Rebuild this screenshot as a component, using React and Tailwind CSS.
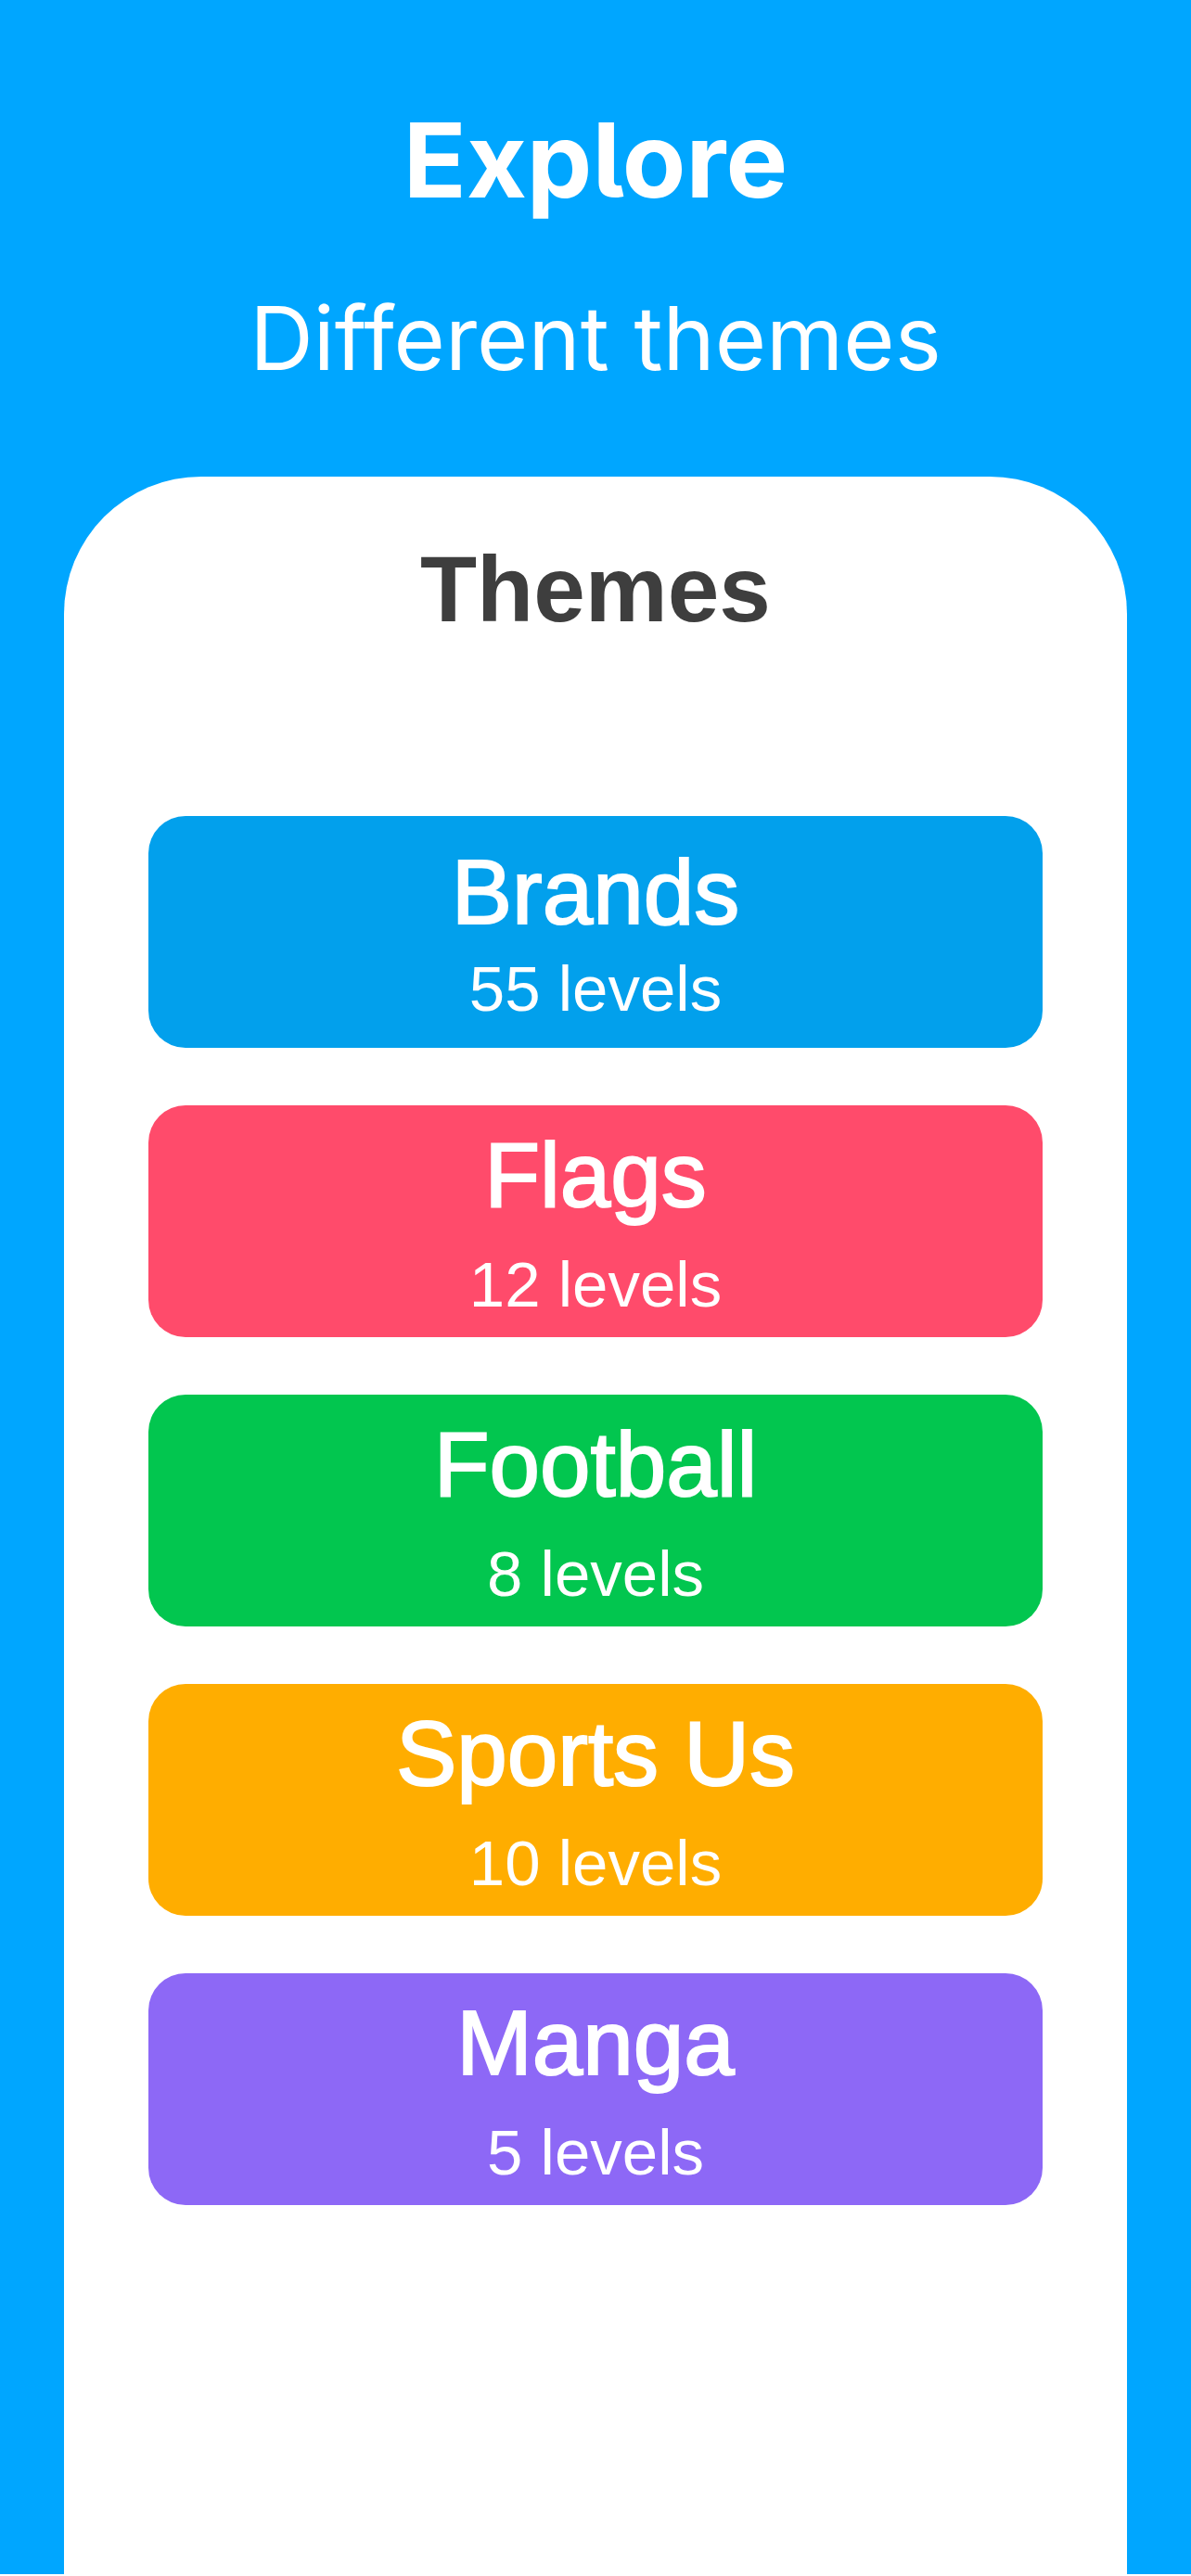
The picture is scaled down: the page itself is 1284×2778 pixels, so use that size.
const themes = [
  { name: "Brands", levels: 55, color: "bg-[#02a0ec]", gap: "gap-5" },
  { name: "Flags", levels: 12, color: "bg-[#ff4b6b]", gap: "gap-[34px]" },
  { name: "Football", levels: 8, color: "bg-[#02c64f]", gap: "gap-[34px]" },
  { name: "Sports Us", levels: 10, color: "bg-[#ffad00]", gap: "gap-[34px]" },
  { name: "Manga", levels: 5, color: "bg-[#8d68f6]", gap: "gap-[34px]" },
];

function ThemeButton({ theme }) {
  return (
    <button
      type="button"
      className={`flex min-h-[250px] w-full flex-col items-center justify-center rounded-[40px] pt-1 text-white ${theme.color} ${theme.gap}`}
    >
      {/* the outline thickens the regular weight to a medium */}
      <span className="text-[98px] leading-[100px] [-webkit-text-stroke:2px_white]">{theme.name}</span>
      <span className="text-[69px] leading-[70px]">{theme.levels} levels</span>
    </button>
  );
}

export default function App() {
  return (
    <div className="flex min-h-screen flex-col border-b-2 border-white bg-[#00a6ff] font-['Liberation_Sans',Arial,sans-serif]">
      {/* cv05 is the lowercase l with a tail */}
      <header className="flex flex-col items-center gap-[83px] pt-28 pb-[99px] text-center font-[Inter,sans-serif] text-white [font-feature-settings:'cv05']">
        <h1 className="text-[112px] leading-[120px] font-bold">Explore</h1>
        <p className="text-[95px] leading-[100px]">Different themes</p>
      </header>
      <main className="mx-[69px] flex grow flex-col rounded-t-[148px] bg-white px-[91px] pt-[71px] pb-20">
        <h2 className="text-center text-[100px] leading-[100px] font-bold text-[#3e3e3e]">Themes</h2>
        <div className="mt-[195px] flex flex-col gap-[62px]">
          {themes.map((theme) => (
            <ThemeButton key={theme.name} theme={theme} />
          ))}
        </div>
      </main>
    </div>
  );
}
